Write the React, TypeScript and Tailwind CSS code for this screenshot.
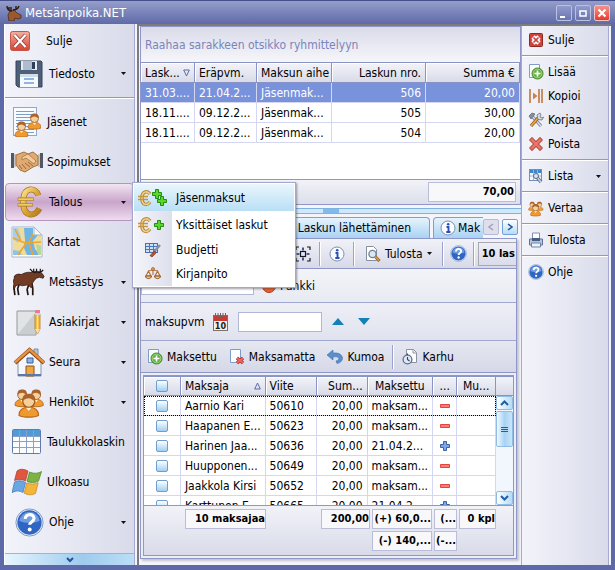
import React from 'react';
import clsx from 'clsx';

type IconProps = { size?: number };

const DiskIcon = () => (
  <svg width="28" height="28" viewBox="0 0 28 28">
    <path d="M1 1h25l1 1v25H3l-2-2z" fill="#4d6078" stroke="#33445c" />
    <path d="M6 1h16v9H6z" fill="#e4ebf3" />
    <path d="M8 1h9v9H8z" fill="#aebccd" />
    <path d="M17 2h3v7h-3z" fill="#2f3f55" />
    <path d="M5 14h18v13H5z" fill="#f6f9fc" />
    <path d="M5 14h18v3H5z" fill="#d3dce8" />
    <path d="M9 19h10M9 23h10" stroke="#6fa0d6" strokeWidth="1.5" />
  </svg>
);

const RedCloseIcon = () => (
  <svg width="20" height="20" viewBox="0 0 20 20">
    <defs>
      <linearGradient id="redBox" x1="0" y1="0" x2="0" y2="1">
        <stop offset="0" stopColor="#f2b0a0" />
        <stop offset="1" stopColor="#d9402f" />
      </linearGradient>
    </defs>
    <rect x=".5" y=".5" width="19" height="19" rx="2" fill="url(#redBox)" stroke="#c4564a" />
    <path d="M4.500 4l11 12M15.500 4l-11 12" stroke="#8f3a34" strokeWidth="3.600" />
    <path d="M4.500 4l11 12M15.500 4l-11 12" stroke="#fff" strokeWidth="2.200" />
  </svg>
);

const Person = ({ x, y, s = 1 }: { x: number; y: number; s?: number }) => (
  <g transform={`translate(${x} ${y}) scale(${s})`}>
    <path d="M0 15c0-4 2.500-5.500 6.500-5.500S13 11 13 15c-3 1.500-10 1.500-13 0z" fill="#ee9a2e" stroke="#b8661a" strokeWidth=".8" />
    <path d="M4.500 9.500L6.500 12l2-2.500z" fill="#fff0d0" />
    <circle cx="6.500" cy="5.500" r="4" fill="#f7cf9b" stroke="#9c5a24" strokeWidth=".8" />
    <path d="M2.300 5.500C2 1.500 4 .5 6.500.5s4.800 1 4.200 5C9 4.500 8 3.500 6.500 3.500S3.500 4.300 2.300 5.500z" fill="#a8642c" />
  </g>
);

const MembersIcon = () => (
  <svg width="28" height="30" viewBox="0 0 28 30">
    <rect x=".5" y=".5" width="23" height="28" fill="#f8fbff" stroke="#8fa9cc" />
    <path d="M3 4.500h18M3 7.500h18M3 10.500h18M3 13.500h18M3 16.500h18M3 19.500h18M3 22.500h18M3 25.500h18" stroke="#7d9cc6" />
    <Person x={15} y={6} />
    <Person x={2} y={14} />
  </svg>
);

const HandshakeIcon = () => (
  <svg width="32" height="22" viewBox="0 0 32 22">
    <path d="M0 2h3v15H0zM29 2h3v15h-3z" fill="#55585c" />
    <path d="M3 3h2v13H3zM27 3h2v13h-2z" fill="#c6c9cc" />
    <path d="M5 4l8-3 4 2 5-2 5 4v9l-5 2-8 5-5-2-4-5z" fill="#e0ab72" stroke="#a3703e" />
    <path d="M11 6l6-3 8 7-2 3-8-6-4 2z" fill="#f3cda0" stroke="#a8743f" strokeWidth=".8" />
    <path d="M8 14l3 4M11 13l4 5M14 12l5 4M17 11l5 4" stroke="#9a683a" />
  </svg>
);

const EuroGlyph = ({ size = 34 }: IconProps) => (
  <svg width={size} height={size} viewBox="0 0 34 34">
    <defs>
      <linearGradient id="gold" x1="0" y1="0" x2="1" y2="1">
        <stop offset="0" stopColor="#f8e08a" />
        <stop offset=".5" stopColor="#dca632" />
        <stop offset="1" stopColor="#b47d1c" />
      </linearGradient>
    </defs>
    <path d="M27 10C24 1 12 1 11 14v6c1 13 13 13 17 4" fill="none" stroke="#a27420" strokeWidth="6.400" />
    <path d="M27 10C24 1 12 1 11 14v6c1 13 13 13 17 4" fill="none" stroke="url(#gold)" strokeWidth="5" />
    <path d="M5 14h17M5 20h16" stroke="#a27420" strokeWidth="3.600" />
    <path d="M5.500 14h16M5.500 20h15" stroke="#f0cb5e" strokeWidth="2.200" />
  </svg>
);

const MapIcon = () => (
  <svg width="32" height="32" viewBox="0 0 32 32">
    <path d="M1 1h22l8 8v22H1z" fill="#fff" stroke="#a8b4c4" />
    <path d="M2 2h20v7h8v20H2z" fill="#f0dc9a" />
    <path d="M13 2h9v7h5l-5 6 2 8 5 6H16l-3-7 1-7z" fill="#6fb4e6" />
    <path d="M2 2h5l3 9-3 6-5-4z" fill="#a9cfe8" />
    <path d="M25 18l5 2v9h-3z" fill="#b5d79c" />
    <path d="M2 24l7 1 2 4H2z" fill="#8fc4ea" />
    <path d="M2 12l12 5 16-1M16 16l-9 13M18 16l4-8M18 17l4 12M4 3l6 12" stroke="#eda52a" strokeWidth="1.600" fill="none" />
    <path d="M23 1v8h8z" fill="#f6f8fb" stroke="#a8b4c4" />
  </svg>
);

const MooseIcon = () => (
  <svg width="34" height="30" viewBox="0 0 34 30">
    <path d="M3 15l-2 6 1 8M7 16l-2 6 1 7M17 17l-2 6 1 6M20 16l1 6v7" stroke="#241613" strokeWidth="1.800" fill="none" />
    <path d="M1 10c1-3 4-4 8-3 4-2 7-3 10-2l4-1c3-1 6 0 8 2l2 3-1 2-4-1-3 1c-2 1-3 4-5 6l1 3-2 1-3-3-6 1-4-1-3 1-2 4-1-1 1-5c-1-2-1-4 1-7z" fill="#723c24" stroke="#2e1a12" strokeWidth=".8" />
    <path d="M25 5c-2 0-5-1-6-3M22 4V1M25 4V1M26 5c3 0 5-1 6-3M29 4V1M19 2l-1-1" stroke="#1d1715" strokeWidth="1.300" fill="none" />
  </svg>
);

const MooseHeadIcon = () => (
  <svg width="16" height="16" viewBox="0 0 16 16">
    <path d="M4 6l4-1 3 3 4 2v3l-3 1-3-1-1 3H3l-1-6z" fill="#9a5a2e" stroke="#43240f" strokeWidth=".7" />
    <path d="M6 6C3 6 1 5 1 1M3 5V2M7 5c3 0 5-1 6-4M10 4V1M5 5V2" stroke="#2c1a10" strokeWidth="1.400" fill="none" />
  </svg>
);

const DocumentPencilIcon = () => (
  <svg width="26" height="27" viewBox="0 0 26 27">
    <path d="M1 2h19v24H1z" fill="#e2e3e4" stroke="#93989d" />
    <path d="M2 25L19 4v21z" fill="#cbced0" />
    <path d="M19 5h5v15l-2.500 5-2.500-5z" fill="#f4c04a" stroke="#b27a20" strokeWidth=".8" />
    <path d="M21 5h1v15h-1z" fill="#fbe29a" />
    <path d="M19 20h5l-2.500 5z" fill="#f4dcb4" />
    <path d="M19 1h5v3h-5z" fill="#ee7a92" />
    <path d="M19 4h5v2h-5z" fill="#cfd4da" />
  </svg>
);

const HouseIcon = () => (
  <svg width="32" height="32" viewBox="0 0 32 32">
    <path d="M21 3h4v8h-4z" fill="#b9c3d0" stroke="#7f8ea3" />
    <path d="M5 14v16h23V14L16.500 4z" fill="#f4f7fb" stroke="#8795ab" />
    <path d="M2 17L16.500 4 31 17" fill="none" stroke="#8d4c1f" strokeWidth="4" />
    <path d="M2 16.500L16.500 3.500 31 16.500" fill="none" stroke="#e8913f" strokeWidth="2.400" />
    <path d="M14 12h6v5h-6z" fill="#8fb4e0" stroke="#3f5f93" />
    <path d="M13 20h8v10h-8z" fill="#f1a63c" stroke="#8a5520" />
    <path d="M5 29h23" stroke="#5f77a8" strokeWidth="2" />
  </svg>
);

const PeopleIcon = ({ size = 31 }: IconProps) => (
  <svg width={size} height={size} viewBox="0 0 31 31">
    <Person x={1} y={2} s={1.1} />
    <Person x={15} y={2} s={1.1} />
    <Person x={5} y={6} s={1.5} />
  </svg>
);

const SheetIcon = () => (
  <svg width="30" height="26" viewBox="0 0 30 26">
    <rect x=".5" y=".5" width="28" height="24" rx="1" fill="#fbfdff" stroke="#5d7cab" />
    <path d="M1 1h27v6H1z" fill="#4f9bd6" />
    <path d="M1 7.500h27M1 12.500h27M1 18.500h27M7.500 1v23M14.500 1v23M21.500 1v23" stroke="#8aa0c8" />
  </svg>
);

const WindowsIcon = () => (
  <svg width="30" height="28" viewBox="0 0 30 28">
    <path d="M5 3c3-2.500 7-2 11 0l-2.500 10C9.500 11 6 11 2.500 12.500z" fill="#e0573f" stroke="#a83c2c" strokeWidth=".7" />
    <path d="M17.500 4c4 1.500 7.500 2 12-.5L26.500 13c-4 2-7.500 2-11.500.5z" fill="#7cb342" stroke="#4c8424" strokeWidth=".7" />
    <path d="M2.500 14c4-2 7-1.500 11 .5L11 24.500c-4-2-7-2-11 .2z" fill="#6aa7e2" stroke="#3a73b4" strokeWidth=".7" />
    <path d="M14.700 15c4 1.500 7.300 1.500 11.500-.3L23.500 25.500c-4 2-7.500 1.500-11.300-.3z" fill="#f4b63a" stroke="#c4841c" strokeWidth=".7" />
  </svg>
);

const HelpIcon = ({ size = 16 }: IconProps) => (
  <svg width={size} height={size} viewBox="0 0 16 16">
    <circle cx="8" cy="8" r="7.500" fill="#dfe9f8" stroke="#7d93bd" strokeWidth=".5" />
    <circle cx="8" cy="8" r="6.700" fill="#2f66c4" />
    <path d="M2.300 7a5.800 5.800 0 0 1 11.400 0C10 8.600 6 8.600 2.300 7z" fill="#6f9ce2" />
    <path d="M5.600 6.100c.1-3.200 4.900-3.200 4.900-.3 0 1.700-2.400 1.800-2.400 3.500" fill="none" stroke="#fff" strokeWidth="1.700" />
    <circle cx="8.100" cy="11.800" r="1.100" fill="#fff" />
  </svg>
);

const InfoIcon = () => (
  <svg width="16" height="16" viewBox="0 0 16 16">
    <circle cx="8" cy="8" r="7" fill="#fbfcff" stroke="#7d8fb4" />
    <path d="M6.500 7H8.500v4.500M6.300 12h4.200" stroke="#2b50b0" strokeWidth="1.900" fill="none" />
    <circle cx="8.200" cy="4.200" r="1.300" fill="#2b50b0" />
  </svg>
);

const AddPageIcon = () => (
  <svg width="16" height="16" viewBox="0 0 16 16">
    <path d="M1.500.5h10v13h-10z" fill="#fbfdff" stroke="#7f9cca" />
    <circle cx="9.500" cy="9.500" r="5.500" fill="#62b03c" stroke="#35761c" strokeWidth=".9" />
    <circle cx="9.500" cy="9.500" r="4.400" fill="none" stroke="#c9ecb4" strokeWidth=".6" />
    <path d="M9.500 6.500v6M6.500 9.500h6" stroke="#fff" strokeWidth="1.700" />
  </svg>
);

const RemovePageIcon = () => (
  <svg width="16" height="16" viewBox="0 0 16 16">
    <path d="M1.500.5h10v13h-10z" fill="#fbfdff" stroke="#7f9cca" />
    <path d="M8 9l6 5M14 9l-6 5" stroke="#a82a24" strokeWidth="3.400" />
    <path d="M8 9l6 5M14 9l-6 5" stroke="#f0685e" strokeWidth="1.800" />
  </svg>
);

const CrossBoxIcon = () => (
  <svg width="14" height="14" viewBox="0 0 14 14">
    <rect x=".5" y=".5" width="13" height="13" rx="1" fill="#d0433c" stroke="#8d2823" />
    <path d="M4 4l6 6M10 4l-6 6" stroke="#fff" strokeWidth="4.600" />
    <path d="M4.500 4.500l5 5M9.500 4.500l-5 5" stroke="#c2413a" strokeWidth="1.600" />
  </svg>
);

const CopyIcon = () => (
  <svg width="14" height="14" viewBox="0 0 14 14">
    <path d="M1 0v14M10 0v14M13 0v14" stroke="#c8834f" strokeWidth="1.800" />
    <path d="M4 3.500L8.500 7 4 10.500z" fill="#c8834f" />
  </svg>
);

const ToolsIcon = () => (
  <svg width="16" height="16" viewBox="0 0 16 16">
    <path d="M3 3l10 11" stroke="#6d7787" strokeWidth="3" />
    <path d="M3 3l10 11" stroke="#dfe4ea" strokeWidth="1.400" />
    <path d="M1 4l3-3 3 1-4 5z" fill="#8490a0" stroke="#566172" strokeWidth=".7" />
    <path d="M10 6l-7 8" stroke="#8f5519" strokeWidth="3.400" />
    <path d="M10 6l-7 8" stroke="#f0a948" strokeWidth="1.800" />
    <path d="M9 3l3-2 1 2-1 2 2 1 1.500-1L14 8l-4-.5z" fill="#d6dce4" stroke="#65707f" strokeWidth=".8" />
  </svg>
);

const DeleteIcon = () => (
  <svg width="14" height="14" viewBox="0 0 14 14">
    <path d="M3 3l8 8M11 3l-8 8" stroke="#a93a30" strokeWidth="4.400" strokeLinecap="square" />
    <path d="M3 3l8 8M11 3l-8 8" stroke="#e87567" strokeWidth="2.800" strokeLinecap="square" />
  </svg>
);

const ListIcon = () => (
  <svg width="16" height="16" viewBox="0 0 16 16">
    <rect x="1.500" y="1.500" width="12" height="11" fill="#f4f8fd" stroke="#6f8fbe" />
    <path d="M2 2h11v3H2z" fill="#3f86cc" />
    <path d="M2 8h11M5.500 2v10M9.500 2v10" stroke="#9db4d6" />
    <path d="M7 7l6 7" stroke="#5c6b85" strokeWidth="3.400" />
    <path d="M7 7l6 7" stroke="#cbd4e2" strokeWidth="1.600" />
    <circle cx="8" cy="8" r="2.500" fill="#dbe2ec" stroke="#5c6b85" />
  </svg>
);

const PrinterIcon = () => (
  <svg width="16" height="16" viewBox="0 0 16 16">
    <path d="M4.500 1h7v7h-7z" fill="#fff" stroke="#7c8fb2" />
    <path d="M1.500 7h13v6h-13z" fill="#b7c4da" stroke="#5f7396" />
    <path d="M4 6h8v3H4z" fill="#455c86" />
    <path d="M3.500 11h9v4h-9z" fill="#eef3fa" stroke="#6e83a8" />
  </svg>
);

const PreviewIcon = () => (
  <svg width="16" height="16" viewBox="0 0 16 16">
    <path d="M1.500.5h7l3 3v11h-10z" fill="#fff" stroke="#848f9f" />
    <circle cx="7.500" cy="8" r="3.600" fill="#d8e8f6" stroke="#75818f" strokeWidth="1.300" />
    <path d="M10.500 11l4 4" stroke="#9a5d20" strokeWidth="3" />
    <path d="M10.500 11l3.500 3.500" stroke="#e69a3c" strokeWidth="1.400" />
  </svg>
);

const SelectionIcon = () => (
  <svg width="16" height="16" viewBox="0 0 16 16" fill="none" stroke="#16181f">
    <path d="M1 4V1h3M12 1h3v3M15 12v3h-3M4 15H1v-3" strokeWidth="1.200" />
    <rect x="5.500" y="5.500" width="5" height="5" strokeWidth="1.200" />
    <path d="M8 1.500v3M8 11.500v3M1.500 8h3M11.500 8h3" stroke="#20306a" strokeWidth="1.600" />
  </svg>
);

const UndoIcon = () => (
  <svg width="16" height="14" viewBox="0 0 16 14">
    <path d="M0 5l6-5v3c6-.5 9 1.500 9.500 5 0 3-2.500 5-5.500 5.500L9 11c2-.5 3-1.500 2.800-2.700C11.300 6.800 9 6.500 6 7v3z" fill="#5a8fca" stroke="#3f72ae" strokeWidth=".6" />
  </svg>
);

const ClockPageIcon = () => (
  <svg width="16" height="16" viewBox="0 0 16 16">
    <path d="M4.500.5h7l3 3v10h-10z" fill="#fff" stroke="#8a93a0" />
    <path d="M11 1v3h3" fill="none" stroke="#8a93a0" />
    <circle cx="5.500" cy="10.500" r="4.400" fill="#dfe8f4" stroke="#5b6e90" strokeWidth="1.300" />
    <path d="M5.500 8v2.500l2 1.500M5.500 4.500v1.500" fill="none" stroke="#2f4468" strokeWidth="1.100" />
  </svg>
);

const CalendarIcon = () => (
  <svg width="15" height="18" viewBox="0 0 15 18">
    <rect x=".5" y="2.500" width="14" height="15" fill="#f4f1ea" stroke="#7c7068" />
    <path d="M1 3h13v5H1z" fill="#c43c34" />
    <path d="M2.500 0v4M5 0v4M7.500 0v4M10 0v4M12.500 0v4" stroke="#6d6664" />
    <text x="7.500" y="16" textAnchor="middle" fontSize="9" fontWeight="bold" fontFamily="DejaVu Sans Condensed" fill="#1c1a1a">10</text>
  </svg>
);

const BankIcon = () => (
  <svg width="14" height="14" viewBox="0 0 14 14">
    <circle cx="7" cy="7" r="6.500" fill="#e8622e" stroke="#a83c18" />
    <circle cx="7" cy="6" r="3" fill="#f8d4c0" />
  </svg>
);

const GreenPlus = ({ x, y }: { x: number; y: number }) => (
  <path transform={`translate(${x} ${y})`} d="M3.500.5h3v3h3v3h-3v3h-3v-3h-3v-3h3z" fill="#5cd62a" stroke="#1f8f10" />
);

const EuroPlusIcon = ({ double = false }: { double?: boolean }) => (
  <svg width="30" height="20" viewBox="0 0 30 20">
    <path d="M12 6C9 2 4 4 4 9v2c0 6 5 7 8 3" fill="none" stroke="#b28436" strokeWidth="3.400" />
    <path d="M12 6C9 2 4 4 4 9v2c0 6 5 7 8 3" fill="none" stroke="#f0d088" strokeWidth="1.600" />
    <path d="M0 8.500h10M0 11.500h10" stroke="#c4953f" strokeWidth="1.500" />
    {double ? (
      <>
        <GreenPlus x={14} y={1} />
        <GreenPlus x={19} y={8} />
      </>
    ) : (
      <GreenPlus x={16} y={5} />
    )}
  </svg>
);

const BudgetIcon = () => (
  <svg width="16" height="16" viewBox="0 0 16 16">
    <rect x=".5" y="1.500" width="12" height="9" fill="#cfe0f5" stroke="#4a6fae" />
    <path d="M1 4.500h12M1 7.500h12M4.500 2v8M8.500 2v8" stroke="#4a78bc" />
    <path d="M15 3L9 10" stroke="#8a8f9c" strokeWidth="2.400" />
    <path d="M9.500 9L5 13.500 7 15l4-4z" fill="#c2502c" stroke="#7f2f16" strokeWidth=".7" />
  </svg>
);

const ScalesIcon = () => (
  <svg width="16" height="14" viewBox="0 0 16 14">
    <path d="M8 1v7M3 4.500C5 2.500 11 2.500 13 4.500M3.500 4L1 9h5zM12.500 4L10 9h5z" fill="none" stroke="#b27138" strokeWidth="1.100" />
    <circle cx="8" cy="2" r="1.500" fill="#e8a55c" stroke="#8f5524" strokeWidth=".7" />
    <path d="M.5 9h6c0 3.500-6 3.500-6 0zM9.500 9h6c0 3.500-6 3.500-6 0z" fill="#f0be84" stroke="#8f5524" />
  </svg>
);

const Caret = () => (
  <svg width="5" height="3" viewBox="0 0 5 3">
    <path d="M0 0h5L2.500 3z" fill="#111" />
  </svg>
);

const SortIcon = ({ up = false }: { up?: boolean }) => (
  <svg width="7" height="8" viewBox="0 0 7 8" fill="none" stroke="#5b6ba8" className="shrink-0">
    <path d={up ? 'M.7 7L3.500 1l2.800 6z' : 'M.7 1L3.500 7l2.800-6z'} />
  </svg>
);

const Divider = () => <div className="my-[3px] h-[2px] border-t border-[#8f98c8] bg-white" />;

const VDivider = () => <div className="h-6 w-[2px] shrink-0 border-l border-[#9aa2cd] bg-white" />;

interface NavItem {
  label: string;
  icon: React.ReactNode;
  arrow?: boolean;
}

const NAV: NavItem[] = [
  { label: 'Jäsenet', icon: <MembersIcon /> },
  { label: 'Sopimukset', icon: <HandshakeIcon /> },
  { label: 'Talous', icon: <EuroGlyph size={32} />, arrow: true },
  { label: 'Kartat', icon: <MapIcon /> },
  { label: 'Metsästys', icon: <MooseIcon />, arrow: true },
  { label: 'Asiakirjat', icon: <DocumentPencilIcon />, arrow: true },
  { label: 'Seura', icon: <HouseIcon />, arrow: true },
  { label: 'Henkilöt', icon: <PeopleIcon />, arrow: true },
  { label: 'Taulukkolaskin', icon: <SheetIcon /> },
  { label: 'Ulkoasu', icon: <WindowsIcon /> },
  { label: 'Ohje', icon: <HelpIcon size={29} />, arrow: true },
];

const INVOICES = [
  ['31.03....', '21.04.2...', 'Jäsenmak...', '506', '20,00'],
  ['18.11....', '09.12.2...', 'Jäsenmak...', '505', '30,00'],
  ['18.11....', '09.12.2...', 'Jäsenmak...', '504', '20,00'],
];

const PAYERS = [
  { name: 'Aarnio Kari', ref: '50610', paid: 'maksam...', ok: false },
  { name: 'Haapanen E...', ref: '50623', paid: 'maksam...', ok: false },
  { name: 'Harinen Jaa...', ref: '50636', paid: '21.04.2...', ok: true },
  { name: 'Huupponen...', ref: '50649', paid: 'maksam...', ok: false },
  { name: 'Jaakkola Kirsi', ref: '50652', paid: 'maksam...', ok: false },
  { name: 'Karttunen E...', ref: '50665', paid: '21.04.2...', ok: true },
];

const NavButton = ({ item }: { item: NavItem }) => {
  const active = item.label === 'Talous';
  return (
    <button
      aria-haspopup={item.arrow ? 'menu' : undefined}
      className={clsx(
        'flex h-full w-full items-center gap-1 rounded border pr-[7px] text-left',
        item.arrow ? 'pl-[7px]' : 'pl-[5px]',
        active
          ? 'border-[#b594bd] bg-linear-to-b from-[#f1e6f1] via-[#c9a5ca] via-50% to-[#eedcee]'
          : 'border-transparent'
      )}
    >
      <span className="flex w-8 shrink-0 justify-center">{item.icon}</span>
      <span className="flex-1">{item.label}</span>
      {item.arrow && <Caret />}
    </button>
  );
};

const MENU = [
  { label: 'Jäsenmaksut', icon: <EuroPlusIcon double />, tall: true },
  { label: 'Yksittäiset laskut', icon: <EuroPlusIcon />, tall: true },
  { label: 'Budjetti', icon: <BudgetIcon />, tall: false },
  { label: 'Kirjanpito', icon: <ScalesIcon />, tall: false },
];

const DropMenu = () => (
  <div
    role="menu"
    className="absolute top-0 left-[127px] z-20 w-[164px] border border-[#a3a8cc] bg-white p-px shadow-[1px_1px_2px_rgba(40,40,60,0.45)]"
  >
    {MENU.map((m, i) => (
      <button
        key={m.label}
        role="menuitem"
        className={clsx(
          'flex w-full items-center text-left',
          m.tall ? 'h-[27px]' : 'h-6',
          i === 0 && 'bg-linear-to-b from-[#e9f6fd] to-[#b9dff5]'
        )}
      >
        <span
          className={clsx(
            'mr-1 flex h-full w-[38px] items-center justify-center',
            i > 0 && 'bg-linear-to-r from-[#f4f5fa] to-[#dddfec]'
          )}
        >
          {m.icon}
        </span>
        {m.label}
      </button>
    ))}
  </div>
);

const Sidebar = () => (
  <nav className="flex w-[131px] shrink-0 flex-col border-r border-l border-l-white border-r-[#a3a9d0] bg-linear-to-r from-[#f3f4fa] to-[#d9dbea]">
    <div className="flex h-[34px] items-center">
      <button className="flex w-full items-center gap-4 pl-[5px] text-left">
        <RedCloseIcon />
        Sulje
      </button>
    </div>
    <div className="mb-[5px] h-[31px]">
      <NavButton item={{ label: 'Tiedosto', icon: <DiskIcon />, arrow: true }} />
    </div>
    <Divider />
    <ul>
      {NAV.map((item) => (
        <li key={item.label} className="relative h-10 py-px">
          <NavButton item={item} />
          {item.label === 'Talous' && <DropMenu />}
        </li>
      ))}
    </ul>
    <button
      aria-label="Lisää painikkeita"
      className="mt-auto flex h-3 items-center justify-center border-t border-[#9fb2dc] bg-linear-to-r from-[#e6f5fe] via-[#9fcbee] via-60% to-[#b9dff6]"
    >
      <svg width="8" height="6" viewBox="0 0 8 6" fill="none" stroke="#20539a" strokeWidth="2">
        <path d="M1 1l3 3 3-3" />
      </svg>
    </button>
  </nav>
);

const ToolItem = ({ label, icon, arrow }: NavItem) => (
  <button className="flex h-6 w-full items-center gap-1 pr-[7px] pl-1.5 text-left">
    <span className="flex w-4 shrink-0 justify-center">{icon}</span>
    <span className="flex-1">{label}</span>
    {arrow && <Caret />}
  </button>
);

const RightBar = () => (
  <aside className="w-[88px] shrink-0 border-x border-x-[#a3a9d0] bg-linear-to-r from-[#f3f4fa] to-[#d9dbea] pt-0.5">
    <ToolItem label="Sulje" icon={<CrossBoxIcon />} />
    <Divider />
    <ToolItem label="Lisää" icon={<AddPageIcon />} />
    <ToolItem label="Kopioi" icon={<CopyIcon />} />
    <ToolItem label="Korjaa" icon={<ToolsIcon />} />
    <ToolItem label="Poista" icon={<DeleteIcon />} />
    <Divider />
    <ToolItem label="Lista" icon={<ListIcon />} arrow />
    <Divider />
    <ToolItem label="Vertaa" icon={<PeopleIcon size={17} />} />
    <Divider />
    <ToolItem label="Tulosta" icon={<PrinterIcon />} />
    <Divider />
    <ToolItem label="Ohje" icon={<HelpIcon />} />
  </aside>
);

const TH = 'border-y border-r border-y-[#8a93c6] border-r-[#8a93c6] bg-linear-to-b from-[#f3f4f9] to-[#d8dae8] px-1 font-normal whitespace-nowrap overflow-hidden shadow-[inset_1px_1px_0_#fff]';
const TD = 'border-r border-b border-[#d5d7f2] px-1 whitespace-nowrap overflow-hidden';

const InvoiceGrid = () => (
  <section className="border border-[#8f97c9] bg-white">
    <p className="flex h-[35px] items-center bg-linear-to-b from-[#d9dbe9] to-[#f6f6fa] px-1 text-[#7a84bb]">
      Raahaa sarakkeen otsikko ryhmittelyyn
    </p>
    <table className="w-full table-fixed border-separate border-spacing-0">
      <colgroup>
        <col className="w-[54px]" />
        <col className="w-[62px]" />
        <col className="w-[75px]" />
        <col />
        <col />
      </colgroup>
      <thead>
        <tr className="h-[21px] text-left">
          <th className={TH}>
            <span className="flex items-center justify-between">
              Lask...
              <SortIcon />
            </span>
          </th>
          <th className={TH}>Eräpvm.</th>
          <th className={TH}>Maksun aihe</th>
          <th className={clsx(TH, 'text-right')}>Laskun nro.</th>
          <th className={clsx(TH, 'text-right')}>Summa €</th>
        </tr>
      </thead>
      <tbody>
        {INVOICES.map((row, i) => (
          <tr key={row[3]} className={clsx('h-5', i === 0 && 'bg-[#7892dc] text-white')}>
            {row.map((cell, j) => (
              <td key={j} className={clsx(TD, j > 2 && 'text-right')}>{cell}</td>
            ))}
          </tr>
        ))}
      </tbody>
    </table>
    <div className="mt-9 flex h-[25px] justify-end border-t border-[#8f97c9] bg-linear-to-b from-[#f2f3f8] to-[#dcdeea] px-1 py-0.5">
      <output className="w-[88px] border border-[#b9bdd8] bg-[#f8f8fb] pr-px text-right text-[11px] leading-[18px] font-bold">70,00</output>
    </div>
  </section>
);

const TAB = 'flex h-[21px] shrink-0 items-center gap-0.5 rounded-t border border-b-0 border-[#7f9fd2] bg-linear-to-b from-[#e6f4fd] to-[#a9d2f2] px-1.5 whitespace-nowrap';
const NAV_BTN = 'flex size-4 items-center justify-center rounded-xs border';

const Tabs = () => (
  <div className="mt-[3px] flex h-[21px] overflow-hidden pl-0.5">
    <div role="tablist" className="flex min-w-0 flex-1 gap-[3px] overflow-hidden">
      <button role="tab" className={clsx(TAB, 'w-[288px] justify-end pr-[18px]')}>Laskun lähettäminen</button>
      <button role="tab" className={TAB}>
        <InfoIcon />
        Mak
      </button>
    </div>
    <div className="flex gap-[3px] pt-0.5 pr-[3px]">
      <button aria-label="Edellinen" className={clsx(NAV_BTN, 'border-[#b9b9cf] bg-[#dedfec]')}>
        <svg width="6" height="8" viewBox="0 0 6 8" fill="none" stroke="#a79fbd" strokeWidth="1.500"><path d="M5 1L1 4l4 3" /></svg>
      </button>
      <button aria-label="Seuraava" className={clsx(NAV_BTN, 'border-[#6fa3d8] bg-linear-to-b from-white to-[#b5dcf7]')}>
        <svg width="6" height="8" viewBox="0 0 6 8" fill="none" stroke="#20539a" strokeWidth="1.500"><path d="M1 1l4 3-4 3" /></svg>
      </button>
    </div>
  </div>
);

const MainToolbar = () => (
  <div className="flex h-[30px] items-center overflow-hidden border-b border-[#8f97c9] bg-linear-to-b from-[#f1f2f8] to-[#d7d9e8] pl-[154px]">
    <button aria-label="Valinta" className="mr-2"><SelectionIcon /></button>
    <VDivider />
    <button aria-label="Tietoja" className="mx-2"><InfoIcon /></button>
    <VDivider />
    <button className="mx-[10px] flex items-center gap-1 whitespace-nowrap">
      <PreviewIcon />
      Tulosta
      <Caret />
    </button>
    <VDivider />
    <button aria-label="Ohje" className="mx-1.5"><HelpIcon size={17} /></button>
    <VDivider />
    <output className="ml-[3px] flex h-6 flex-1 items-center border border-r-0 border-[#a9a9b4] pl-[3px] text-[11px] font-bold whitespace-nowrap">10 las</output>
  </div>
);

const PaymentRows = () => (
  <>
    <div className="flex h-[34px] items-start gap-2 border-b border-[#a0a7d0] bg-linear-to-b from-[#f3f4f9] to-[#e8eaf2] pt-1">
      <input aria-label="Viite" className="h-[22px] w-[113px] border border-[#b3b7d6] bg-white px-1" />
      <button className="flex h-[26px] items-center gap-1">
        <BankIcon />
        Pankki
      </button>
    </div>
    <div className="flex h-[38px] items-center border-b border-[#a0a7d0] bg-linear-to-b from-[#eeeff6] to-[#e0e2ee] pl-1">
      <label htmlFor="maksupvm" className="w-[68px]">maksupvm</label>
      <CalendarIcon />
      <input id="maksupvm" className="mx-[10px] h-5 w-[84px] border border-[#b3b7d6] bg-white px-1" />
      <button aria-label="Seuraava päivä">
        <svg width="12" height="7" viewBox="0 0 12 7"><path d="M0 7h12L6 0z" fill="#1480b8" /></svg>
      </button>
      <button aria-label="Edellinen päivä" className="ml-[14px]">
        <svg width="12" height="7" viewBox="0 0 12 7"><path d="M0 0h12L6 7z" fill="#1480b8" /></svg>
      </button>
    </div>
    <div className="flex h-8 items-center gap-3 border-b border-[#8f97c9] bg-linear-to-b from-[#e6e8f1] to-[#d5d8e7] pl-1.5 whitespace-nowrap">
      <button className="flex items-center gap-1"><AddPageIcon />Maksettu</button>
      <button className="flex items-center gap-1"><RemovePageIcon />Maksamatta</button>
      <button className="flex items-center gap-1"><UndoIcon />Kumoa</button>
      <div className="-mx-1"><VDivider /></div>
      <button className="flex items-center gap-1"><ClockPageIcon />Karhu</button>
    </div>
  </>
);

const CHECK = 'block size-3 appearance-none rounded-xs border border-[#6f9dce] bg-linear-to-b from-white to-[#9fd0f2] mx-auto';
const SUM = 'h-5 overflow-hidden border border-[#b9bdd8] bg-[#f8f8fb] text-right text-[11px] leading-[18px] font-bold whitespace-nowrap';

const ColWidths = () => (
  <colgroup>
    <col className="w-[39px]" />
    <col />
    <col className="w-[53px]" />
    <col className="w-[51px]" />
    <col className="w-[62px]" />
    <col className="w-[25px]" />
    <col className="w-[39px]" />
  </colgroup>
);

const PayerGrid = () => (
  <section className="m-0.5 flex min-h-0 flex-1 flex-col border border-[#8f97c9] bg-white">
    <div className="flex min-h-0 flex-1 overflow-hidden">
      <table className="h-0 flex-1 table-fixed border-separate border-spacing-0">
        <ColWidths />
        <thead>
          <tr className="h-5 text-left">
            <th className={TH}><input type="checkbox" aria-label="Valitse kaikki" className={CHECK} /></th>
            <th className={TH}>
              <span className="flex items-center justify-between">
                Maksaja
                <SortIcon up />
              </span>
            </th>
            <th className={TH}>Viite</th>
            <th className={clsx(TH, 'text-right')}>Sum...</th>
            <th className={clsx(TH, 'text-center')}>Maksettu</th>
            <th className={clsx(TH, 'text-center')}>...</th>
            <th className={clsx(TH, 'text-center')}>Mu...</th>
          </tr>
        </thead>
        <tbody>
          {PAYERS.map((p, i) => (
            <tr key={p.ref} className={clsx('h-5', i === 0 && 'outline-1 -outline-offset-1 outline-dotted outline-black')}>
              <td className={TD}><input type="checkbox" aria-label={p.name} className={CHECK} /></td>
              <td className={TD}>{p.name}</td>
              <td className={TD}>{p.ref}</td>
              <td className={clsx(TD, 'text-right')}>20,00</td>
              <td className={TD}>{p.paid}</td>
              <td className={TD}>
                <svg width="10" height="10" viewBox="0 0 10 10" className="mx-auto">
                  {p.ok ? (
                    <path d="M3.500.5h3v3h3v3h-3v3h-3v-3h-3v-3h3z" fill="#7ea6e0" stroke="#3a62a8" />
                  ) : (
                    <path d="M.5 3.500h9v3h-9z" fill="#ff8078" stroke="#e8413a" />
                  )}
                </svg>
              </td>
              <td className={TD} />
            </tr>
          ))}
        </tbody>
      </table>
      <div className="flex w-[17px] flex-col bg-[#f2f7fd]">
        <div className="h-5 border-y border-[#8a93c6] bg-linear-to-b from-[#f3f4f9] to-[#d8dae8]" />
        <button aria-label="Ylös" className="flex h-[14px] items-center justify-center rounded-xs border border-[#8fbbe4] bg-linear-to-r from-white to-[#b5dcf7]">
          <svg width="9" height="6" viewBox="0 0 9 6" fill="none" stroke="#1f5fa8" strokeWidth="2"><path d="M1 5l3.500-3.500L8 5" /></svg>
        </button>
        <div className="mt-px flex h-9 flex-col items-center justify-center gap-px rounded-xs border border-[#8fbbe4] bg-linear-to-r from-[#f0f9ff] via-[#a8d3f4] to-[#c9e6fa]">
          <span className="h-px w-[7px] bg-[#1f5fa8]" />
          <span className="h-px w-[7px] bg-[#1f5fa8]" />
          <span className="h-px w-[7px] bg-[#1f5fa8]" />
        </div>
        <button aria-label="Alas" className="mt-auto flex h-[14px] items-center justify-center rounded-xs border border-[#8fbbe4] bg-linear-to-r from-white to-[#b5dcf7]">
          <svg width="9" height="6" viewBox="0 0 9 6" fill="none" stroke="#1f5fa8" strokeWidth="2"><path d="M1 1l3.500 3.500L8 1" /></svg>
        </button>
      </div>
    </div>
    <div className="h-[50px] border-t border-[#8f97c9] bg-linear-to-b from-[#f2f3f8] to-[#d8dae8] pt-[3px] pr-[17px]">
      <table className="w-full table-fixed border-separate border-spacing-0">
        <ColWidths />
        <tbody>
          <tr>
            <td />
            <td className="pl-0.5"><div className={SUM}>10 maksajaa</div></td>
            <td />
            <td className="pl-0.5"><div className={SUM}>200,00</div></td>
            <td className="pl-0.5"><div className={SUM}>(+) 60,0...</div></td>
            <td className="pl-0.5"><div className={SUM}>(...</div></td>
            <td className="pl-0.5"><div className={SUM}>0 kpl</div></td>
          </tr>
          <tr>
            <td colSpan={4} />
            <td className="pt-0.5 pl-0.5"><div className={SUM}>(-) 140,...</div></td>
            <td className="pt-0.5 pl-0.5"><div className={SUM}>(-...</div></td>
            <td />
          </tr>
        </tbody>
      </table>
    </div>
  </section>
);

const TitleBar = () => (
  <header className="flex h-6 items-center gap-[3px] border-t border-[#454f8c] bg-linear-to-b from-[#959ecb] to-[#5f6aa8] pr-[5px] pl-1.5 text-[13px] text-white">
    <MooseHeadIcon />
    <h1 className="flex-1">Metsänpoika.NET</h1>
    <button aria-label="Pienennä" className="size-4 rounded-xs border border-[#b9c0e0] bg-linear-to-b from-[#929bca] to-[#6a75b2]">
      <svg width="14" height="14" viewBox="0 0 14 14"><path d="M3 10h5v2H3z" fill="#fff" /></svg>
    </button>
    <button aria-label="Suurenna" className="size-4 rounded-xs border border-[#b9c0e0] bg-linear-to-b from-[#929bca] to-[#6a75b2]">
      <svg width="14" height="14" viewBox="0 0 14 14"><path d="M4 5h6v5H4z" fill="none" stroke="#fff" strokeWidth="1.500" /></svg>
    </button>
    <button aria-label="Sulje ikkuna" className="size-4 rounded-xs border border-[#f2c4c0] bg-linear-to-b from-[#f59088] to-[#e8352c]">
      <svg width="14" height="14" viewBox="0 0 14 14"><path d="M3.500 3.500l7 7M10.500 3.500l-7 7" stroke="#fff" strokeWidth="2.200" /></svg>
    </button>
  </header>
);

export default function App() {
  return (
    <div className="flex h-screen flex-col bg-[#5d69a8] font-['DejaVu_Sans_Condensed','Noto_Sans',sans-serif] text-[12px] leading-[16px] text-black">
      <TitleBar />
      <div className="mx-1 mb-[5px] flex min-h-0 flex-1 bg-[#f4f4fa]">
        <Sidebar />
        <div className="ml-0.5 flex min-w-0 flex-1 border-t-2 border-l-2 border-[#7b7b80] pr-0.5">
          <main className="flex min-w-0 flex-1 flex-col pb-1.5 pl-px">
            <InvoiceGrid />
            <div className="mt-[3px] flex h-1.5 shrink-0 justify-center border-y border-[#7fb2e2] bg-[#cfe8fa]">
              <div className="w-4 bg-[#7fbcec]" />
            </div>
            <Tabs />
            <div className="mr-1 flex min-h-0 flex-1 flex-col border border-[#8f97c9] bg-[#eceef5] shadow-[2px_2px_2px_#c3c4d0]">
              <MainToolbar />
              <PaymentRows />
              <PayerGrid />
            </div>
          </main>
          <RightBar />
        </div>
      </div>
    </div>
  );
}
